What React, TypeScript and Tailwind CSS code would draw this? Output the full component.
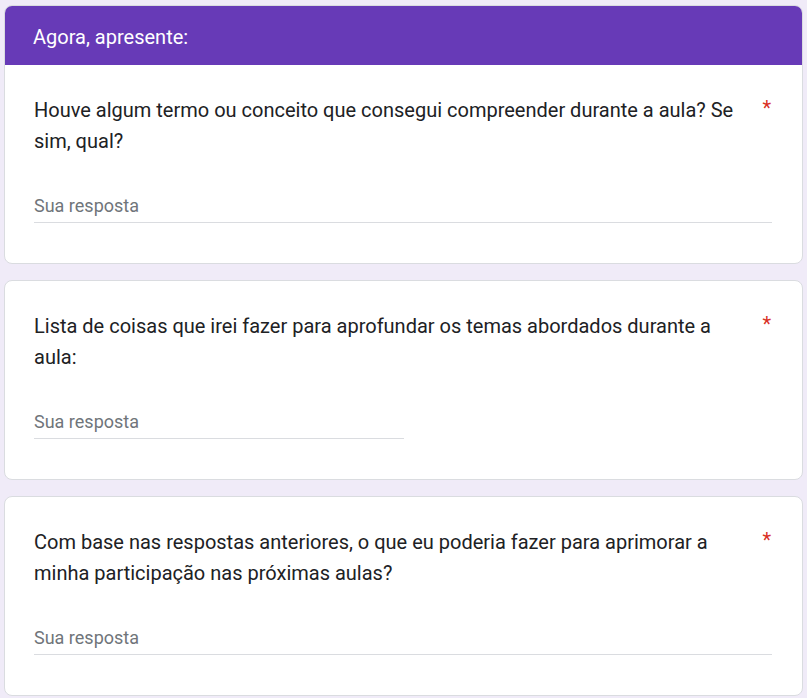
import React from "react";

const font = { fontFamily: "Roboto, 'Noto Sans', Arial, sans-serif" };

function Question({ text, half }: { text: string; half?: boolean }) {
  return (
    <div className="pt-[30px] pb-[40px] pl-[29px] pr-[30px]">
      <div className="flex items-start">
        <div className="flex-1 text-[20px] leading-[31px] text-[#202124]">{text}</div>
        <span className="w-[18px] text-right text-[#d93025] text-[20px] leading-[31px] -mt-[2px] pr-[1px]">*</span>
      </div>
      <div className={`mt-[37px] border-b border-[#dadce0] pb-[4px] ${half ? "w-[370px]" : "w-full"}`}>
        <div className="text-[18px] leading-[24px] text-[#70757a]">Sua resposta</div>
      </div>
    </div>
  );
}

export default function App() {
  return (
    <div className="min-h-[698px] w-[807px] bg-[#f0ebf8] pt-[5px] px-[4px] pb-[4px]" style={font}>
      <div className="flex flex-col gap-[16px]">
        <div className="rounded-[8px] bg-white border border-[#dadce0] overflow-hidden">
          <div className="bg-[#673ab7] h-[60px] pl-[29px] pt-[3px] flex items-center text-white text-[20px] -mx-px -mt-px">
            Agora, apresente:
          </div>
          <Question text="Houve algum termo ou conceito que consegui compreender durante a aula? Se sim, qual?" />
        </div>
        <div className="rounded-[8px] bg-white border border-[#dadce0]">
          <Question text="Lista de coisas que irei fazer para aprofundar os temas abordados durante a aula:" half />
        </div>
        <div className="rounded-[8px] bg-white border border-[#dadce0]">
          <Question text="Com base nas respostas anteriores, o que eu poderia fazer para aprimorar a minha participação nas próximas aulas?" />
        </div>
      </div>
    </div>
  );
}
